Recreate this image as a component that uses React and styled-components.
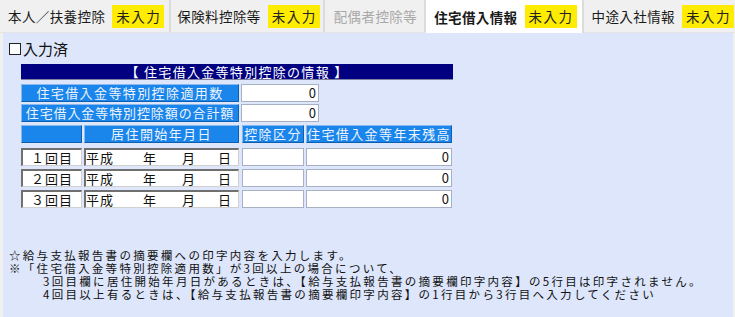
import styled, { createGlobalStyle } from "styled-components";

const GlobalStyle = createGlobalStyle`
  html, body {
    margin: 0;
    padding: 0;
    background: #f0f0f0;
    font-family: "Noto Sans CJK JP", "DejaVu Sans", sans-serif;
  }
`;

const tabs = [
  { label: "本人／扶養控除", badge: true },
  { label: "保険料控除等", badge: true },
  { label: "配偶者控除等", disabled: true },
  { label: "住宅借入情報", badge: true, active: true },
  { label: "中途入社情報", badge: true },
];

const rows = ["１回目", "２回目", "３回目"];

const App = () => {
  return (
    <>
      <GlobalStyle />
      <Screen>
        <TabBar>
          {tabs.map((t) => (
            <Tab key={t.label} $active={t.active} $disabled={t.disabled}>
              <TabLabel $active={t.active}>{t.label}</TabLabel>
              {t.badge && <Badge>未入力</Badge>}
            </Tab>
          ))}
        </TabBar>
        <Panel>
          <Check>
            <Box />
            入力済
          </Check>
          <Form>
            <TitleBar>【 住宅借入金等特別控除の情報 】</TitleBar>
            <Row $mt={4}>
              <Label $w={218}>住宅借入金等特別控除適用数</Label>
              <Input $w={78}>0</Input>
            </Row>
            <Row $mt={2}>
              <Label $w={218} $tight>住宅借入金等特別控除額の合計額</Label>
              <Input $w={78}>0</Input>
            </Row>
            <Row $mt={3}>
              <Label $w={61} />
              <Label $w={155}>居住開始年月日</Label>
              <Label $w={62} $ml={1}>控除区分</Label>
              <Label $w={146}>住宅借入金等年末残高</Label>
            </Row>
            {rows.map((r, i) => (
              <Row key={r} $mt={i === 0 ? 5 : 3}>
                <Sunken $w={61} $center>{r}</Sunken>
                <Sunken $w={155}>
                  <DateText>
                    <span>平成</span>
                    <span>年</span>
                    <span>月</span>
                    <span>日</span>
                  </DateText>
                </Sunken>
                <Input $w={62} $ml={1} />
                <Input $w={146}>0</Input>
              </Row>
            ))}
          </Form>
          <Notes>
            <div>☆給与支払報告書の摘要欄への印字内容を入力します。</div>
            <div>※「住宅借入金等特別控除適用数」が3回以上の場合について、</div>
            <Indent>
              3回目欄に居住開始年月日があるときは、【給与支払報告書の摘要欄印字内容】の5行目は印字されません。
            </Indent>
            <Indent>
              4回目以上有るときは、【給与支払報告書の摘要欄印字内容】の1行目から3行目へ入力してください
            </Indent>
          </Notes>
        </Panel>
      </Screen>
    </>
  );
};

const Screen = styled.div`
  width: 735px;
  height: 317px;
  display: flex;
  flex-direction: column;
  overflow: hidden;
`;

const TabBar = styled.div`
  display: flex;
  height: 32px;
  background: #f0f0f0;
  border-bottom: 1px solid #e4e4e4;
`;

const Tab = styled.div`
  flex: none;
  display: flex;
  align-items: center;
  gap: 7px;
  padding: 0 5px 0 8px;
  height: ${({ $active }) => ($active ? "33px" : "32px")};
  background: ${({ $active }) => ($active ? "#ffffff" : "transparent")};
  border-right: 2px solid #dcdcdc;
  color: ${({ $disabled }) => ($disabled ? "#a8a8a8" : "#1a1a1a")};
  font-size: 13.5px;
  letter-spacing: 0.4px;
  white-space: nowrap;
  &:nth-child(2) {
    padding-left: 6px;
    padding-right: 3px;
  }
  &:nth-child(3) {
    padding-left: 9px;
    padding-right: 7px;
  }
  &:last-child {
    border-right: none;
  }
`;

const TabLabel = styled.span`
  font-weight: ${({ $active }) => ($active ? 700 : 400)};
`;

const Badge = styled.span`
  background: #ffec00;
  color: #222;
  padding: 2px 3px 2px 4px;
  line-height: 19px;
  letter-spacing: 1.5px;
  font-size: 13.5px;
`;

const Panel = styled.div`
  flex: 1;
  margin-left: 3px;
  margin-right: 2px;
  background: #dde6fa;
  padding-top: 7px;
`;

const Check = styled.div`
  display: flex;
  align-items: center;
  gap: 2px;
  margin-left: 6px;
  font-size: 15px;
  color: #111;
  line-height: 18px;
`;

const Box = styled.span`
  width: 10px;
  height: 10px;
  border: 1px solid #222;
  background: #fff;
`;

const Form = styled.div`
  margin: 6px 0 0 18px;
  width: 432px;
  display: flex;
  flex-direction: column;
`;

const TitleBar = styled.div`
  height: 15px;
  background: #000080;
  border-bottom: 1px solid #8080a0;
  color: #fff;
  font-size: 13px;
  line-height: 15px;
  text-align: center;
  letter-spacing: 1.3px;
`;

const Row = styled.div`
  display: flex;
  gap: 2px;
  margin-top: ${({ $mt }) => $mt}px;
`;

const Label = styled.div`
  box-sizing: border-box;
  width: ${({ $w }) => $w}px;
  margin-left: ${({ $ml }) => $ml || 0}px;
  height: 18px;
  background: #1a85ea;
  border-top: 1px solid #8ab8ee;
  border-left: 1px solid #8ab8ee;
  border-right: 1px solid #0f5fb0;
  border-bottom: 1px solid #0f5fb0;
  color: #eef4ff;
  font-size: 13px;
  line-height: 16px;
  text-align: center;
  letter-spacing: ${({ $tight }) => ($tight ? "0.9px" : "1.4px")};
  white-space: nowrap;
  overflow: hidden;
`;

const Input = styled.div`
  box-sizing: border-box;
  width: ${({ $w }) => $w}px;
  margin-left: ${({ $ml }) => $ml || 0}px;
  height: 18px;
  background: #fff;
  border: 1px solid #a8b0c4;
  color: #111;
  font-size: 13px;
  line-height: 16px;
  text-align: right;
  padding-right: 2px;
`;

const Sunken = styled.div`
  box-sizing: border-box;
  width: ${({ $w }) => $w}px;
  height: 18px;
  background: #fff;
  border-top: 2px solid #707070;
  border-left: 2px solid #707070;
  border-right: 1px solid #d0d0d0;
  border-bottom: 1px solid #d0d0d0;
  color: #111;
  font-size: 13px;
  line-height: 15px;
  text-align: ${({ $center }) => ($center ? "center" : "left")};
  letter-spacing: 1px;
`;

const DateText = styled.div`
  display: grid;
  grid-template-columns: 57px 39px 36px 1fr;
`;

const Notes = styled.div`
  margin: 41px 0 0 6px;
  font-size: 11.5px;
  line-height: 13px;
  color: #111;
  letter-spacing: 2.3px;
  white-space: nowrap;
`;

const Indent = styled.div`
  padding-left: 34px;
`;

export default App;
